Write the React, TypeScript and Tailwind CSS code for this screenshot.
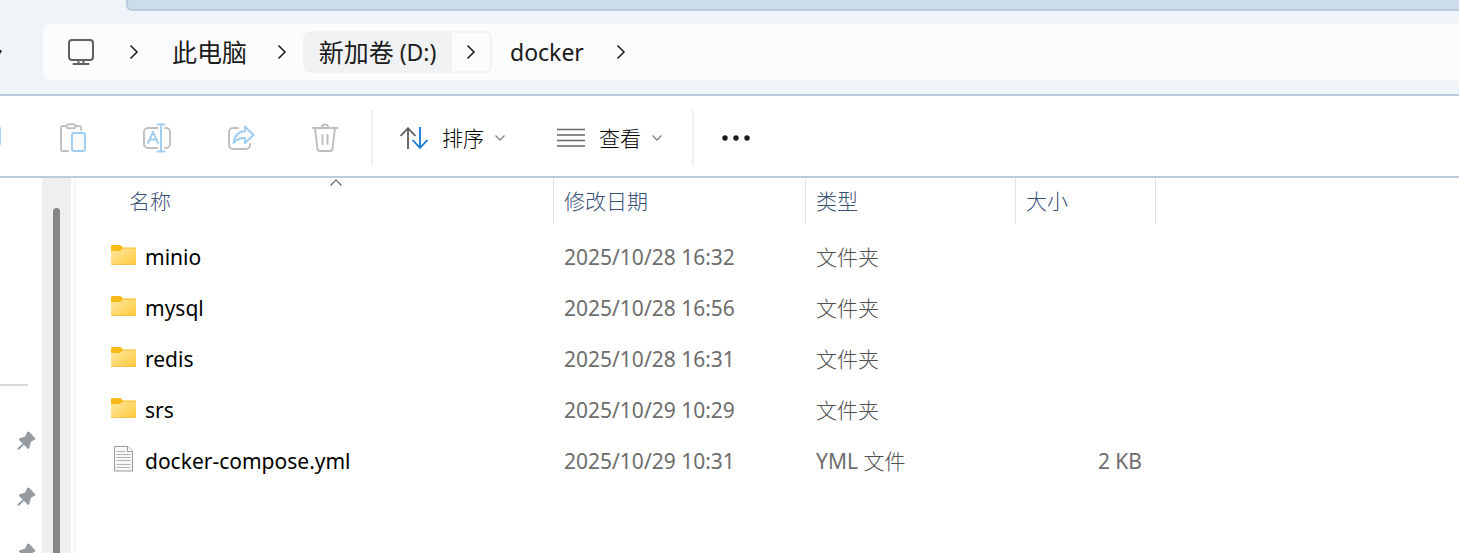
import type { ReactNode } from "react";

const SANS = "font-['Noto_Sans','Noto_Sans_CJK_SC',sans-serif]";

function MonitorIcon() {
  return (
    <svg width="28" height="28" viewBox="0 0 28 28" fill="none" stroke="#5f6160" strokeWidth="2" strokeLinecap="round">
      <rect x="2" y="2" width="24" height="20" rx="3" />
      <path d="M11.500 22v4M16.500 22v4M6.500 26h15" />
    </svg>
  );
}

function ChevronRight() {
  return (
    <svg width="10" height="16" viewBox="0 0 10 16" fill="none" stroke="#1b1b1b" strokeWidth="1.500">
      <path d="M1.500 1.500L8 8l-6.500 6.500" />
    </svg>
  );
}

function ChevronDown() {
  return (
    <svg width="10" height="6" viewBox="0 0 10 6" fill="none" stroke="#858585" strokeWidth="1.300">
      <path d="M0.500 0.500L5 5l4.500-4.500" />
    </svg>
  );
}

function CopyIcon() {
  return (
    <svg width="28" height="28" viewBox="0 0 28 28" fill="none" strokeWidth="1.800">
      <path d="M6 22H3a2 2 0 0 1-2-2V6" stroke="#c0c0c0" />
      <rect x="8" y="2" width="18" height="20" rx="3" stroke="#9fcdf2" />
    </svg>
  );
}

function PasteIcon() {
  return (
    <svg width="28" height="30" viewBox="0 0 28 30" fill="none" strokeWidth="1.900" strokeLinecap="round">
      <path d="M9 28H4a2 2 0 0 1-2-2V5a2 2 0 0 1 2-2h3M17 3h3a2 2 0 0 1 2 2v2" stroke="#c0c0c0" />
      <rect x="7.500" y="1.200" width="9" height="4" rx="2" stroke="#c0c0c0" />
      <rect x="13" y="10" width="13" height="18" rx="2" stroke="#9fcdf2" fill="#fafafa" />
    </svg>
  );
}

function RenameIcon() {
  return (
    <svg width="30" height="30" viewBox="0 0 30 30" fill="none" strokeWidth="1.900" strokeLinecap="round">
      <path d="M15.500 5H6a4 4 0 0 0-4 4v12a4 4 0 0 0 4 4h9.500M23 5h1a4 4 0 0 1 4 4v12a4 4 0 0 1-4 4h-1" stroke="#c0c0c0" />
      <path d="M6 20l5-11 5 11M7.500 16.500h7M15.500 1.500h7M15.500 28.500h7M19 1.500v27" stroke="#9fcdf2" />
    </svg>
  );
}

function ShareIcon() {
  return (
    <svg width="28" height="26" viewBox="0 0 28 26" fill="none" strokeWidth="1.900" strokeLinecap="round" strokeLinejoin="round">
      <path d="M11 3H6a4 4 0 0 0-4 4v13a4 4 0 0 0 4 4h13a4 4 0 0 0 4-4v-1" stroke="#c0c0c0" />
      <path d="M18 1.500l8.500 8.500-8.500 8v-5c-5 0-8.500 1-11.500 5 1-7.500 5-11.500 11.500-12z" stroke="#9fcdf2" fill="#fafafa" />
    </svg>
  );
}

function TrashIcon() {
  return (
    <svg width="28" height="30" viewBox="0 0 28 30" fill="none" stroke="#bdbdbd" strokeWidth="1.900" strokeLinecap="round">
      <path d="M2 5h24M10.500 5a3.500 3.500 0 0 1 7 0M4 5l2.500 21a2.500 2.500 0 0 0 2.500 2h10a2.500 2.500 0 0 0 2.500-2L24 5M11.500 12v9M16.500 12v9" />
    </svg>
  );
}

function SortIcon() {
  return (
    <svg width="28" height="22" viewBox="0 0 28 22" fill="none" strokeWidth="1.800">
      <path d="M8 22V1M0.500 9L8 1.200l7.500 7.800" stroke="#5c5c5c" />
      <path d="M20 0v21M12.500 13l7.500 7.800 7.500-7.800" stroke="#0f7bd6" />
    </svg>
  );
}

function LinesIcon() {
  return (
    <svg width="28" height="20" viewBox="0 0 28 20" stroke="#666" strokeWidth="1.700">
      <path d="M0 1.500h28M0 7h28M0 12.500h28M0 18h28" />
    </svg>
  );
}

function FolderIcon() {
  return (
    <svg width="26" height="20" viewBox="0 0 26 20">
      <defs>
        <linearGradient id="folder-front" x1="0" y1="0" x2="1" y2="1">
          <stop offset="0" stopColor="#ffe9a3" />
          <stop offset="1" stopColor="#ffc83a" />
        </linearGradient>
      </defs>
      <path d="M0 1.200A1.200 1.200 0 0 1 1.200 0h7.600q.7 0 1.200.5L12 2.500h12a1 1 0 0 1 1 1V10H0z" fill="#f9b916" />
      <path d="M0 6h8.500q.8 0 1.300-.5L11.500 3.500H25V19a1 1 0 0 1-1 1H1a1 1 0 0 1-1-1z" fill="url(#folder-front)" />
      <path d="M0.500 19.600h24" stroke="#f0bd45" strokeWidth="0.800" />
    </svg>
  );
}

function DocumentIcon() {
  return (
    <svg width="26" height="26" viewBox="0 0 26 26" fill="none">
      <path d="M3.500 0.500h13.500l4.500 4.500v20h-18z" fill="#f7f7f7" stroke="#9b9b9b" />
      <path d="M16.500 0.500v5h5" fill="#fff" stroke="#9b9b9b" />
      <path d="M5.500 5.500h9M5.500 8.500h14M5.500 11.500h14M5.500 14.500h14M5.500 18.500h14M5.500 21.500h14" stroke="#b4b4b4" />
    </svg>
  );
}

function PinIcon() {
  return (
    <svg width="20" height="20" viewBox="0 0 20 20" fill="#929ba2">
      <path d="M11.200 1q1-.9 2 0l5.900 5.900q.9 1-.2 1.700l-4.100 2.200-1.400 6.200q-.5 1.500-1.900.5l-3.700-3.700-4.500 4.600-2 .7.600-2.100 4.700-4.500-3.200-3.300q-1-1.300.5-1.900l5.200-1.800z" />
    </svg>
  );
}

function ToolButton({ label, children }: { label: string; children: ReactNode }) {
  return (
    <button type="button" aria-label={label} className="flex h-14 w-14 shrink-0 items-center justify-center">
      {children}
    </button>
  );
}

const entries = [
  { name: "minio", date: "2025/10/28 16:32", ext: "", kind: "文件夹", size: "" },
  { name: "mysql", date: "2025/10/28 16:56", ext: "", kind: "文件夹", size: "" },
  { name: "redis", date: "2025/10/28 16:31", ext: "", kind: "文件夹", size: "" },
  { name: "srs", date: "2025/10/29 10:29", ext: "", kind: "文件夹", size: "" },
  { name: "docker-compose.yml", date: "2025/10/29 10:31", ext: "YML ", kind: "文件", size: "2 KB" },
];

function AddressBar() {
  return (
    <header className="shrink-0 border-b-2 border-[#bccbdd] bg-[#eff4f9]">
      <div className="ml-[126px] h-[11px] rounded-bl-md border-b-2 border-l-2 border-[#bccbdd] bg-[#cddceb]" />
      <div className="flex pt-[13px] pb-[14px]">
        <div className="flex w-[43px] shrink-0 items-center overflow-hidden">
          <svg width="2" height="8" viewBox="0 0 2 8" fill="#222">
            <path d="M0 2h1.500v2L0 6z" />
          </svg>
        </div>
        <nav aria-label="路径" className="flex h-14 min-w-0 grow items-center rounded-l-lg bg-[#fbfcfe] text-[25px] leading-8 text-[#1b1b1b]">
          <a href="#computer" aria-label="计算机" className="ml-6">
            <MonitorIcon />
          </a>
          <span className="ml-[34px]"><ChevronRight /></span>
          <a href="#pc" className="ml-[33px] whitespace-nowrap">此电脑</a>
          <span className="ml-[30px]"><ChevronRight /></span>
          <div className="ml-4 flex h-[42px] shrink-0 overflow-hidden rounded-lg bg-[#f1f2f4]">
            <a href="#d" className="flex w-[149px] items-center justify-center gap-[6px] whitespace-nowrap">
              <span>新加卷</span>
              <span className="text-[23px]">(D:)</span>
            </a>
            <button type="button" aria-label="展开" className="flex w-10 items-center justify-center rounded-r-lg border-2 border-l-0 border-[#f1f2f4] bg-[#fbfcfe]">
              <ChevronRight />
            </button>
          </div>
          <a href="#docker" className="ml-[18px] text-[23px]">docker</a>
          <span className="ml-8"><ChevronRight /></span>
        </nav>
      </div>
    </header>
  );
}

function Toolbar() {
  return (
    <div role="toolbar" className="flex h-[82px] shrink-0 items-center overflow-hidden border-b-2 border-[#bccbdd] pt-1 text-[21px] text-[#1b1b1b]">
      <div className="flex w-[45px] shrink-0 justify-start">
        <button type="button" aria-label="复制" className="-ml-[26px]"><CopyIcon /></button>
      </div>
      <div className="flex gap-7">
        <ToolButton label="粘贴"><PasteIcon /></ToolButton>
        <ToolButton label="重命名"><RenameIcon /></ToolButton>
        <ToolButton label="共享"><ShareIcon /></ToolButton>
        <ToolButton label="删除"><TrashIcon /></ToolButton>
      </div>
      <div className="ml-[18px] h-14 w-[2px] shrink-0 bg-[#efefef]" />
      <button type="button" className="ml-[27px] flex shrink-0 items-center whitespace-nowrap">
        <SortIcon />
        <span className="mr-[11px] ml-[14px] pt-[2px] font-light text-black">排序</span>
        <ChevronDown />
      </button>
      <button type="button" className="ml-[52px] flex shrink-0 items-center whitespace-nowrap">
        <LinesIcon />
        <span className="mr-[11px] ml-[14px] pt-[2px] font-light text-black">查看</span>
        <ChevronDown />
      </button>
      <div className="ml-[30px] h-14 w-[2px] shrink-0 bg-[#efefef]" />
      <button type="button" aria-label="更多" className="ml-7">
        <svg width="28" height="8" viewBox="0 0 28 8" fill="#1b1b1b">
          <circle cx="3" cy="4" r="2.700" />
          <circle cx="14" cy="4" r="2.700" />
          <circle cx="25" cy="4" r="2.700" />
        </svg>
      </button>
    </div>
  );
}

function FileTable() {
  const head = "h-[46px] border-r border-[#e2e2e2] pl-[10px] text-left font-light text-[#3a5176]";
  return (
    <table className="w-full table-fixed border-separate border-spacing-0 text-[21px] leading-7">
      <colgroup>
        <col className="w-[478px]" />
        <col className="w-[252px]" />
        <col className="w-[210px]" />
        <col className="w-[140px]" />
        <col />
      </colgroup>
      <thead>
        <tr>
          <th className="relative h-[46px] border-r border-[#e2e2e2] pl-[53px] text-left font-light text-[#3a5176]">
            名称
            <svg className="absolute top-[1px] left-[254px]" width="12" height="7" viewBox="0 0 12 7" fill="none" stroke="#666" strokeWidth="1.200">
              <path d="M0.500 6.500L6 1l5.500 5.500" />
            </svg>
          </th>
          <th className={head}>修改日期</th>
          <th className={head}>类型</th>
          <th className={head}>大小</th>
          <td />
        </tr>
      </thead>
      <tbody className="before:block before:h-[7px]">
        {entries.map((f) => (
          <tr key={f.name} className="text-[#6d6d6d]">
            <td className="h-[51px] pl-[35px] text-black">
              <div className="flex items-center gap-2">
                <span className="mb-1">{f.ext ? <DocumentIcon /> : <FolderIcon />}</span>
                <span>{f.name}</span>
              </div>
            </td>
            <td className="pl-[10px]">{f.date}</td>
            <td className="pl-[10px]">
              {f.ext}
              <span className="font-light text-[#505050]">{f.kind}</span>
            </td>
            <td className="pr-[14px] text-right">{f.size}</td>
            <td />
          </tr>
        ))}
      </tbody>
    </table>
  );
}

export default function App() {
  return (
    <div className={`flex h-screen flex-col overflow-hidden bg-white ${SANS}`}>
      <AddressBar />
      <Toolbar />
      <div className="flex min-h-0 grow">
        <aside className="w-[42px] shrink-0 overflow-hidden pt-[206px]">
          <div className="mb-[27px] h-[2px] w-7 bg-[#d9d9d9]" />
          <div className="flex h-14 items-center pl-4"><PinIcon /></div>
          <div className="flex h-14 items-center pl-4"><PinIcon /></div>
          <div className="flex h-14 items-center pl-4"><PinIcon /></div>
        </aside>
        <div className="flex w-[29px] shrink-0 justify-center bg-[#efefef] pt-[30px]">
          <div className="w-[7px] rounded-t-full bg-[#868686]" />
        </div>
        <main className="ml-[3px] min-w-0 grow overflow-hidden border-l-2 border-[#f6f6f6]">
          <FileTable />
        </main>
      </div>
    </div>
  );
}
